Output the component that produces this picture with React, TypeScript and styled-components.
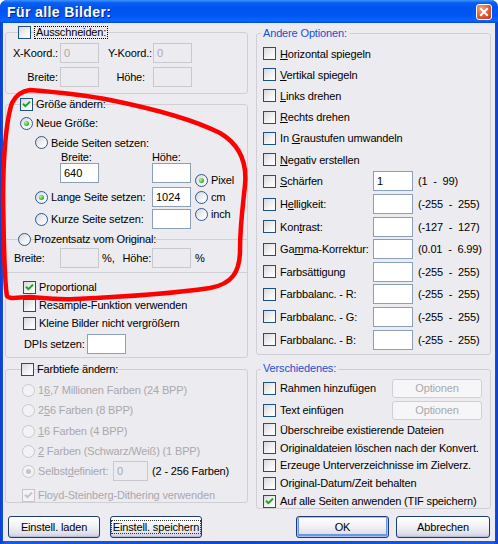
import React from 'react';
import styled, { createGlobalStyle } from 'styled-components';

const GlobalStyle = createGlobalStyle`
  html, body {
    margin: 0;
    padding: 0;
    background: #ffffff;
  }
  body {
    font-family: 'Liberation Sans', Arial, sans-serif;
    font-size: 11px;
    letter-spacing: -0.15px;
    color: #000;
  }
`;

const BG = '#ecebef';
const LINE = '#d0cfd6';
const MUTED = '#a9a8ae';

const Window = styled.div`
  position: relative;
  width: 498px;
  height: 544px;
  display: flex;
  flex-direction: column;
  background: linear-gradient(90deg, #0a3fd0 0%, #1a5ae6 1%, #0b47da 50%, #1a5ae6 99%, #0a3fd0 100%);
  border-radius: 7px 7px 0 0;
  overflow: hidden;
`;

const TitleBar = styled.div`
  height: 23px;
  flex: none;
  display: flex;
  align-items: center;
  justify-content: space-between;
  padding: 0 6px 0 7px;
  background: linear-gradient(
    180deg,
    #3d95ff 0%,
    #0a5ff2 12%,
    #0053ee 35%,
    #0058f2 70%,
    #0a66ff 90%,
    #0046dc 100%
  );
`;

const TitleText = styled.span`
  color: #fff;
  font-family: 'Liberation Sans', Arial, sans-serif;
  font-weight: 700;
  font-size: 14px;
  letter-spacing: 0.4px;
  text-shadow: 1px 1px 0 #0a1f8c;
`;

const CloseButton = styled.div`
  box-sizing: border-box;
  width: 16px;
  height: 16px;
  border: 1px solid #fff;
  border-radius: 3px;
  background: radial-gradient(circle at 30% 25%, #f4a283 0%, #e4582c 55%, #c33a12 100%);
  display: flex;
  align-items: center;
  justify-content: center;
`;

const Client = styled.div`
  flex: 1;
  margin: 0 3px 3px;
  background: ${BG};
  display: grid;
  grid-template-columns: 243px 235px;
  column-gap: 8px;
  padding: 9px 4px 0 2px;
`;

const Column = styled.div`
  display: flex;
  flex-direction: column;
`;

const Group = styled.div<{ $h: number; $mt?: number }>`
  box-sizing: border-box;
  height: ${(p) => p.$h}px;
  margin-top: ${(p) => p.$mt ?? 0}px;
  border: 1px solid ${LINE};
  border-radius: 3px;
  display: flex;
  flex-direction: column;
`;

const Legend = styled.div<{ $ml: number; $solid?: boolean }>`
  align-self: flex-start;
  display: flex;
  align-items: center;
  gap: 3px;
  height: 14px;
  margin: -8px 0 0 ${(p) => p.$ml}px;
  padding: ${(p) => (p.$solid ? '0 2px' : '0')};
  background: ${(p) => (p.$solid ? BG : 'transparent')};
  color: ${(p) => (p.$solid ? '#1d4fd0' : '#000')};
`;

const FocusText = styled.span`
  border: 1px dotted #000;
  padding: 0 1px;
  line-height: 11px;
  background: ${BG};
`;

const Box = styled.span<{ $disabled?: boolean }>`
  box-sizing: border-box;
  flex: none;
  width: 13px;
  height: 13px;
  border: 1px solid ${(p) => (p.$disabled ? '#c6c5cc' : '#1c5180')};
  background: ${(p) =>
    p.$disabled ? '#f3f3f5' : 'linear-gradient(135deg, #d8d8dc 0%, #f4f4f6 60%, #ffffff 100%)'};
  display: flex;
  align-items: center;
  justify-content: center;
`;

const Ring = styled.span<{ $disabled?: boolean }>`
  box-sizing: border-box;
  flex: none;
  width: 13px;
  height: 13px;
  border-radius: 50%;
  border: 1px solid ${(p) => (p.$disabled ? '#c9c8ce' : '#2a5b8c')};
  background: ${(p) =>
    p.$disabled ? '#f3f3f5' : 'linear-gradient(135deg, #d6d6da 0%, #f4f4f6 60%, #ffffff 100%)'};
  display: flex;
  align-items: center;
  justify-content: center;
`;

const Dot = styled.span<{ $disabled?: boolean }>`
  width: 5px;
  height: 5px;
  border-radius: 50%;
  background: ${(p) =>
    p.$disabled ? '#c4c3c9' : 'radial-gradient(circle at 35% 35%, #b5f0b0 0%, #3fbf3a 55%, #1f8f1d 100%)'};
`;

const CheckBox: React.FC<{ checked?: boolean; disabled?: boolean }> = ({ checked, disabled }) => (
  <Box $disabled={disabled}>
    {checked && (
      <svg width="9" height="9" viewBox="0 0 9 9">
        <path
          d="M1 3.8 L3.4 6.2 L8 1.6"
          fill="none"
          stroke={disabled ? '#c4c3c9' : '#21a121'}
          strokeWidth="2"
        />
      </svg>
    )}
  </Box>
);

const Radio: React.FC<{ checked?: boolean; disabled?: boolean }> = ({ checked, disabled }) => (
  <Ring $disabled={disabled}>{checked && <Dot $disabled={disabled} />}</Ring>
);

const Field = styled.input<{ $w: number }>`
  box-sizing: border-box;
  flex: none;
  width: ${(p) => p.$w}px;
  height: 20px;
  margin: 0;
  padding: 0 0 0 3px;
  border: 1px solid #8a9fb8;
  background: #fff;
  font: 11px 'Liberation Sans', Arial, sans-serif;
  color: #000;
  outline: none;

  &:disabled {
    border-color: #c9c8ce;
    background: ${BG};
    color: ${MUTED};
  }
`;

/* --- left: Ausschneiden --- */

const CoordGrid = styled.div`
  display: grid;
  grid-template-columns: 54px 39px 54px 39px;
  grid-auto-rows: 20px;
  row-gap: 4px;
  margin-top: 4px;
  align-items: center;
`;

const FieldLabel = styled.span<{ $pr: number }>`
  text-align: right;
  padding-right: ${(p) => p.$pr}px;
  color: #000;
`;

/* --- left: Größe ändern --- */

const OptionLine = styled.div<{ $mt: number; $pl: number; $h?: number; $muted?: boolean }>`
  display: flex;
  align-items: center;
  gap: 3px;
  height: ${(p) => p.$h ?? 14}px;
  margin-top: ${(p) => p.$mt}px;
  padding-left: ${(p) => p.$pl}px;
  color: ${(p) => (p.$muted ? MUTED : '#000')};
  white-space: nowrap;
`;

const SizeGrid = styled.div`
  display: grid;
  grid-template-columns: 29px 25px 92px 39px 4px 1fr;
  grid-template-rows: 15px 13px 20px 4px 20px 2px 20px;
  grid-template-areas:
    '. both both both . .'
    '. . wl hl . .'
    '. . wi hi . units'
    '. . . . . units'
    '. long long li . units'
    '. . . . . units'
    '. short short si . units';
  margin-top: 5px;
`;

const Area = styled.div<{ $area: string; $pl?: number }>`
  grid-area: ${(p) => p.$area};
  display: flex;
  align-items: center;
  gap: 3px;
  padding-left: ${(p) => p.$pl ?? 0}px;
  white-space: nowrap;
`;

const Units = styled.div`
  grid-area: units;
  display: flex;
  flex-direction: column;
  gap: 3px;
  padding-top: 10px;
`;

const UnitItem = styled.div`
  display: flex;
  align-items: center;
  gap: 3px;
  height: 14px;
`;

const StruckHead = styled.div<{ $mt: number; $pl: number }>`
  display: flex;
  align-items: center;
  gap: 3px;
  height: 14px;
  margin-top: ${(p) => p.$mt}px;
  padding-left: ${(p) => p.$pl}px;
  background: linear-gradient(${LINE}, ${LINE}) 0 7px / 100% 1px no-repeat;
`;

const PercentGrid = styled.div`
  display: grid;
  grid-template-columns: 54px 39px 53px 39px auto;
  height: 20px;
  margin-top: 2px;
  align-items: center;
`;

const PercentLabel = styled.span<{ $pl: number }>`
  padding-left: ${(p) => p.$pl}px;
`;

const PercentMid = styled.span`
  display: flex;
  gap: 8px;
  padding-left: 3px;
`;

const Rule = styled.div`
  height: 1px;
  margin-top: 4px;
  background: ${LINE};
`;

const FixedLabel = styled.span<{ $w: number; $dark?: boolean }>`
  width: ${(p) => p.$w}px;
  flex: none;
  color: ${(p) => (p.$dark ? '#000' : 'inherit')};
`;

const DarkText = styled.span`
  color: #000;
  padding-left: 1px;
`;

/* --- right column --- */

const OptList = styled.div`
  display: flex;
  flex-direction: column;
  margin-top: 3px;
`;

const OptRow = styled.div<{ $h: number }>`
  height: ${(p) => p.$h}px;
  display: flex;
  align-items: center;
  gap: 4px;
  padding-left: 6px;
  white-space: nowrap;
`;

const ValueRow = styled.div`
  height: 22.6px;
  display: grid;
  grid-template-columns: 116px 40px auto;
  align-items: center;
`;

const ValueLabel = styled.span`
  display: flex;
  align-items: center;
  gap: 4px;
  padding-left: 6px;
  white-space: nowrap;
`;

const RangeText = styled.span`
  padding-left: 5px;
  white-space: pre;
`;

const ExtraRow = styled.div<{ $h: number }>`
  height: ${(p) => p.$h}px;
  display: grid;
  grid-template-columns: 135px 90px;
  align-items: center;
`;

/* --- buttons --- */

const ButtonRow = styled.div<{ $mt: number; $ml: number; $gap: number }>`
  display: flex;
  gap: ${(p) => p.$gap}px;
  margin-top: ${(p) => p.$mt}px;
  padding-left: ${(p) => p.$ml}px;
`;

const Button = styled.div<{ $w: number; $default?: boolean }>`
  box-sizing: border-box;
  width: ${(p) => p.$w}px;
  height: 22px;
  border: 1px solid #1f3b6f;
  border-radius: 3px;
  display: flex;
  align-items: center;
  justify-content: center;
  background: linear-gradient(180deg, #ffffff 0%, #f3f3f6 45%, #e0e1ea 80%, #c9cde0 100%);
  box-shadow: ${(p) =>
    p.$default ? 'inset 0 0 0 1px #a9c2f3, inset 0 -1px 0 2px #6c95e4' : 'inset 0 -1px 0 0 #b8bdd2'};
  white-space: nowrap;
`;

const FocusLabel = styled.span`
  border: 1px dotted #333;
  padding: 0 1px;
  line-height: 12px;
`;

const SmallButton = styled.div`
  box-sizing: border-box;
  height: 19px;
  border: 1px solid #cfd0d6;
  border-radius: 3px;
  background: #f6f6f8;
  color: ${MUTED};
  display: flex;
  align-items: center;
  justify-content: center;
`;

const Scribble = styled.svg`
  position: absolute;
  left: 0;
  top: 0;
  pointer-events: none;
`;

const options = [
  { pre: '', key: 'H', rest: 'orizontal spiegeln' },
  { pre: '', key: 'V', rest: 'ertikal spiegeln' },
  { pre: '', key: 'L', rest: 'inks drehen' },
  { pre: '', key: 'R', rest: 'echts drehen' },
  { pre: 'In ', key: 'G', rest: 'raustufen umwandeln' },
  { pre: '', key: 'N', rest: 'egativ erstellen' },
];

const values = [
  { pre: '', key: 'S', rest: 'chärfen', value: '1', range: '(1  -  99)' },
  { pre: 'H', key: 'e', rest: 'lligkeit:', value: '', range: '(-255  -  255)' },
  { pre: 'Kon', key: 't', rest: 'rast:', value: '', range: '(-127  -  127)' },
  { pre: 'Ga', key: 'm', rest: 'ma-Korrektur:', value: '', range: '(0.01  -  6.99)' },
  { pre: 'Farbsättigung', key: '', rest: '', value: '', range: '(-255  -  255)' },
  { pre: 'Farbbalanc. - R:', key: '', rest: '', value: '', range: '(-255  -  255)' },
  { pre: 'Farbbalanc. - G:', key: '', rest: '', value: '', range: '(-255  -  255)' },
  { pre: 'Farbbalanc. - B:', key: '', rest: '', value: '', range: '(-255  -  255)' },
];

const misc = [
  { label: 'Überschreibe existierende Dateien', checked: false },
  { label: 'Originaldateien löschen nach der Konvert.', checked: false },
  { label: 'Erzeuge Unterverzeichnisse im Zielverz.', checked: false },
  { label: 'Original-Datum/Zeit behalten', checked: false },
  { label: 'Auf alle Seiten anwenden (TIF speichern)', checked: true },
];

export default function App() {
  return (
    <>
      <GlobalStyle />
      <Window>
        <TitleBar>
          <TitleText>Für alle Bilder:</TitleText>
          <CloseButton>
            <svg width="10" height="10" viewBox="0 0 10 10">
              <path d="M2 2 L8 8 M8 2 L2 8" stroke="#fff" strokeWidth="2" strokeLinecap="square" />
            </svg>
          </CloseButton>
        </TitleBar>

        <Client>
          <Column>
            <Group $h={62}>
              <Legend $ml={12}>
                <CheckBox />
                <FocusText>Ausschneiden:</FocusText>
              </Legend>
              <CoordGrid>
                <FieldLabel $pr={2}>X-Koord.:</FieldLabel>
                <Field $w={39} disabled readOnly value="0" />
                <FieldLabel $pr={1}>Y-Koord.:</FieldLabel>
                <Field $w={39} disabled readOnly value="0" />
                <FieldLabel $pr={2}>Breite:</FieldLabel>
                <Field $w={39} disabled readOnly value="" />
                <FieldLabel $pr={8}>Höhe:</FieldLabel>
                <Field $w={39} disabled readOnly value="" />
              </CoordGrid>
            </Group>

            <Group $h={254} $mt={10}>
              <Legend $ml={14}>
                <CheckBox checked />
                <span>Größe ändern:</span>
              </Legend>
              <OptionLine $mt={5} $pl={14}>
                <Radio checked />
                <span>Neue Größe:</span>
              </OptionLine>
              <SizeGrid>
                <Area $area="both">
                  <Radio />
                  <span>Beide Seiten setzen:</span>
                </Area>
                <Area $area="wl" $pl={1}>Breite:</Area>
                <Area $area="hl">Höhe:</Area>
                <Area $area="wi">
                  <Field $w={39} readOnly value="640" />
                </Area>
                <Area $area="hi">
                  <Field $w={39} readOnly value="" />
                </Area>
                <Area $area="long">
                  <Radio checked />
                  <span>Lange Seite setzen:</span>
                </Area>
                <Area $area="li">
                  <Field $w={39} readOnly value="1024" />
                </Area>
                <Area $area="short">
                  <Radio />
                  <span>Kurze Seite setzen:</span>
                </Area>
                <Area $area="si">
                  <Field $w={39} readOnly value="" />
                </Area>
                <Units>
                  <UnitItem>
                    <Radio checked />
                    <span>Pixel</span>
                  </UnitItem>
                  <UnitItem>
                    <Radio />
                    <span>cm</span>
                  </UnitItem>
                  <UnitItem>
                    <Radio />
                    <span>inch</span>
                  </UnitItem>
                </Units>
              </SizeGrid>
              <StruckHead $mt={3} $pl={12}>
                <Radio />
                <span>Prozentsatz vom Original:</span>
              </StruckHead>
              <PercentGrid>
                <PercentLabel $pl={8}>Breite:</PercentLabel>
                <Field $w={39} disabled readOnly value="" />
                <PercentMid>
                  <span>%,</span>
                  <span>Höhe:</span>
                </PercentMid>
                <Field $w={39} disabled readOnly value="" />
                <PercentLabel $pl={4}>%</PercentLabel>
              </PercentGrid>
              <Rule />
              <OptionLine $mt={7} $pl={17}>
                <CheckBox checked />
                <span>Proportional</span>
              </OptionLine>
              <OptionLine $mt={4} $pl={17}>
                <CheckBox />
                <span>Resample-Funktion verwenden</span>
              </OptionLine>
              <OptionLine $mt={4} $pl={17}>
                <CheckBox />
                <span>Kleine Bilder nicht vergrößern</span>
              </OptionLine>
              <OptionLine $mt={4} $pl={18} $h={20}>
                <FixedLabel $w={60}>DPIs setzen:</FixedLabel>
                <Field $w={39} readOnly value="" />
              </OptionLine>
            </Group>

            <Group $h={134} $mt={11}>
              <Legend $ml={15}>
                <CheckBox />
                <span>Farbtiefe ändern:</span>
              </Legend>
              <OptionLine $mt={7} $pl={16} $muted>
                <Radio disabled />
                <span>
                  1<u>6</u>,7 Millionen Farben (24 BPP)
                </span>
              </OptionLine>
              <OptionLine $mt={6} $pl={16} $muted>
                <Radio disabled />
                <span>
                  2<u>5</u>6 Farben (8 BPP)
                </span>
              </OptionLine>
              <OptionLine $mt={7} $pl={16} $muted>
                <Radio disabled />
                <span>
                  <u>1</u>6 Farben (4 BPP)
                </span>
              </OptionLine>
              <OptionLine $mt={6} $pl={16} $muted>
                <Radio disabled />
                <span>
                  <u>2</u> Farben (Schwarz/Weiß) (1 BPP)
                </span>
              </OptionLine>
              <OptionLine $mt={3} $pl={16} $h={20} $muted>
                <Radio checked disabled />
                <FixedLabel $w={72}>
                  Selbst<u>d</u>efiniert:
                </FixedLabel>
                <Field $w={35} disabled readOnly value="0" />
                <DarkText>(2 - 256 Farben)</DarkText>
              </OptionLine>
              <OptionLine $mt={7} $pl={16} $muted>
                <CheckBox checked disabled />
                <span>Floyd-Steinberg-Dithering verwenden</span>
              </OptionLine>
            </Group>

            <ButtonRow $mt={13} $ml={3} $gap={10}>
              <Button $w={92}>Einstell. laden</Button>
              <Button $w={92}>
                <FocusLabel>Einstell. speichern</FocusLabel>
              </Button>
            </ButtonRow>
          </Column>

          <Column>
            <Group $h={322} $mt={1}>
              <Legend $ml={4} $solid>
                Andere Optionen:
              </Legend>
              <OptList>
                {options.map((o) => (
                  <OptRow key={o.rest} $h={21.2}>
                    <CheckBox />
                    <span>
                      {o.pre}
                      <u>{o.key}</u>
                      {o.rest}
                    </span>
                  </OptRow>
                ))}
                {values.map((v) => (
                  <ValueRow key={v.pre + v.rest}>
                    <ValueLabel>
                      <CheckBox />
                      <span>
                        {v.pre}
                        {v.key && <u>{v.key}</u>}
                        {v.rest}
                      </span>
                    </ValueLabel>
                    <Field $w={40} readOnly value={v.value} />
                    <RangeText>{v.range}</RangeText>
                  </ValueRow>
                ))}
              </OptList>
            </Group>

            <Group $h={140} $mt={14}>
              <Legend $ml={4} $solid>
                Verschiedenes:
              </Legend>
              <OptList>
                <ExtraRow $h={22}>
                  <ValueLabel>
                    <CheckBox />
                    <span>Rahmen hinzufügen</span>
                  </ValueLabel>
                  <SmallButton>Optionen</SmallButton>
                </ExtraRow>
                <ExtraRow $h={22}>
                  <ValueLabel>
                    <CheckBox />
                    <span>Text einfügen</span>
                  </ValueLabel>
                  <SmallButton>Optionen</SmallButton>
                </ExtraRow>
                {misc.map((m) => (
                  <OptRow key={m.label} $h={17.8}>
                    <CheckBox checked={m.checked} />
                    <span>{m.label}</span>
                  </OptRow>
                ))}
              </OptList>
            </Group>

            <ButtonRow $mt={7} $ml={40} $gap={7}>
              <Button $w={93} $default>
                OK
              </Button>
              <Button $w={94}>Abbrechen</Button>
            </ButtonRow>
          </Column>
        </Client>

        <Scribble width="498" height="544" viewBox="0 0 498 544">
          <path
            d="M30,90 C55,92 80,94 110,100 C150,108 190,118 220,133 C242,146 247,165 245,185 C243,205 240,225 240,250 C240,272 232,284 210,288 C170,294 120,297 75,299 C50,300 38,297 30,297 C20,297 10,300 7,296 C4,280 4,240 3,200 C3,160 6,120 12,103 C16,95 22,91 30,90 Z"
            fill="none"
            stroke="#ff0000"
            strokeWidth="4.5"
            strokeLinejoin="round"
          />
        </Scribble>
      </Window>
    </>
  );
}
